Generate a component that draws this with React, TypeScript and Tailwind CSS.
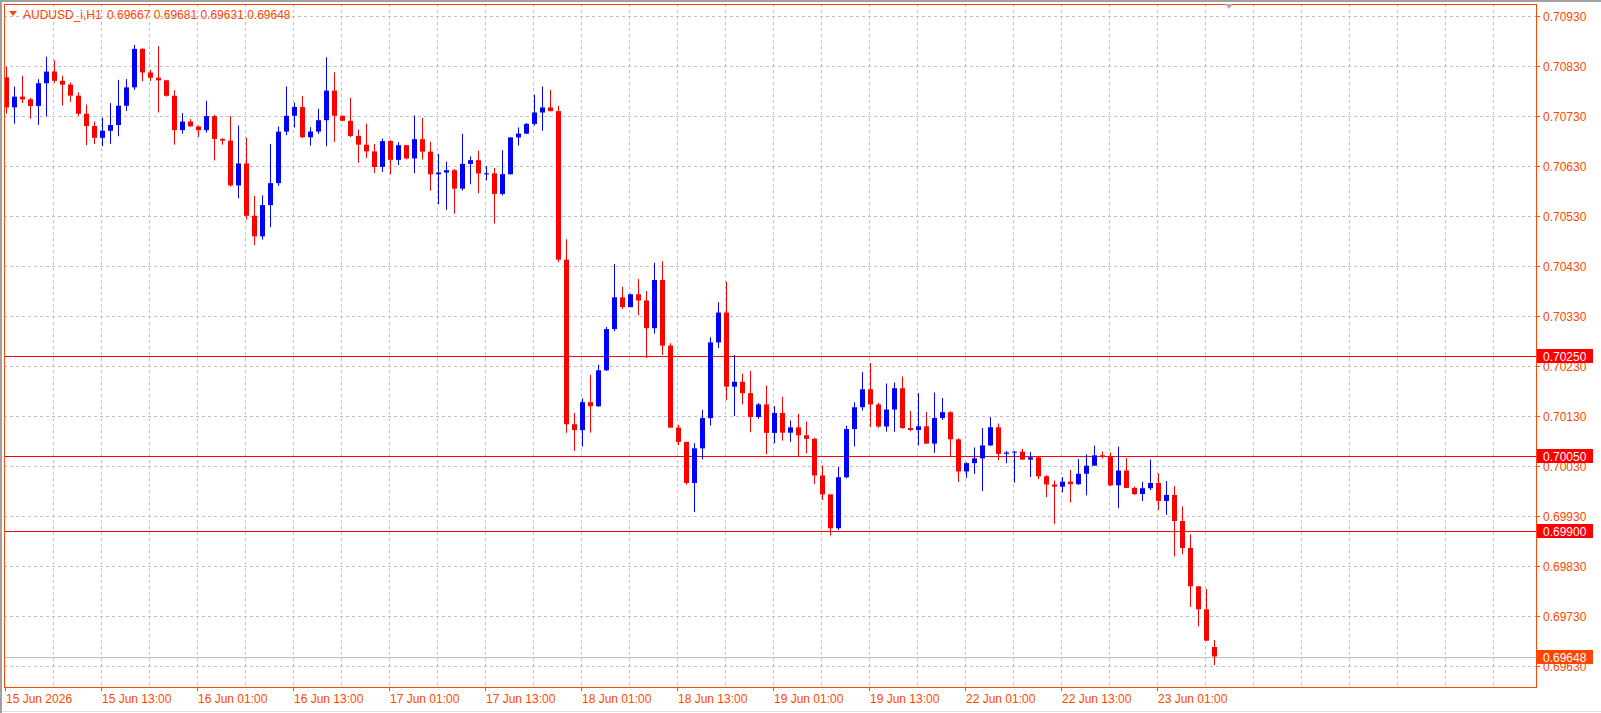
import React from "react";

const W = 1601, H = 713;
const L = 4, T = 4, R = 1536, B = 687;
const py = (p: number) => 15.5 + (0.7093 - p) * 50000;

const wp: [number, number][] = [
  [8,90],[30,110],[45,75],[60,75],[70,105],[90,125],[110,120],[130,55],[150,85],[165,105],[185,135],[205,125],[215,130],[220,170],[235,170],[245,235],[255,210],[270,145],[285,95],[295,135],[310,110],[320,95],[335,105],[345,125],[360,150],[375,150],[390,140],[400,140],[410,160],[430,175],[440,185],[455,160],[470,180],[485,180],[495,150],[510,130],[525,115],[530,110],[538,115],[545,265],[548,430],[555,410],[570,400],[580,390],[590,340],[600,300],[610,280],[625,300],[630,330],[635,290],[640,285],[645,300],[650,410],[660,420],[670,460],[680,440],[690,350],[695,300],[700,310],[710,380],[720,385],[735,400],[750,410],[765,420],[775,415],[790,425],[800,490],[810,505],[820,440],[830,420],[835,385],[845,390],[855,410],[865,410],[875,370],[880,420],[890,420],[905,425],[915,415],[925,415],[935,470],[945,440],[955,460],[965,420],[975,430],[985,435],[995,455],[1005,460],[1020,480],[1030,480],[1040,470],[1050,465],[1060,445],[1070,430],[1080,475],[1090,465],[1100,470],[1110,470],[1120,475],[1130,490],[1140,495],[1150,530],[1160,560],[1165,600],[1175,595],[1180,635],[1187,640],
];
const toBar = (x: number) => (x / 0.976 - 6) / 8;
const toPrice = (y: number) => 0.7093 - ((y - 15) / 48.8) * 0.001;
const pts = wp.map(([x, y]) => [toBar(x), toPrice(y)] as [number, number]);
const NB = 152;
let seed = 7;
const rnd = () => { seed = (seed * 16807) % 2147483647; return seed / 2147483647; };
const interp = (b: number) => {
  if (b <= pts[0][0]) return pts[0][1];
  for (let i = 1; i < pts.length; i++) {
    if (b <= pts[i][0]) {
      const [x0, y0] = pts[i - 1], [x1, y1] = pts[i];
      return y0 + ((b - x0) / Math.max(0.001, x1 - x0)) * (y1 - y0);
    }
  }
  return pts[pts.length - 1][1];
};
type C = { o: number; h: number; l: number; c: number };
const candles: C[] = [];
let prev = interp(0) + 0.0003;
for (let i = 0; i < NB; i++) {
  const base = interp(i);
  const c = i === NB - 1 ? 0.69648 : base + (rnd() - 0.5) * 0.0006;
  const o = i === NB - 1 ? 0.69667 : prev;
  const h = i === NB - 1 ? 0.69681 : Math.max(o, c) + rnd() * rnd() * 0.0008;
  const l = i === NB - 1 ? 0.69631 : Math.min(o, c) - rnd() * rnd() * 0.0008;
  candles.push({ o, h, l, c });
  prev = c;
}

const prices = Array.from({ length: 14 }, (_, i) => 0.7093 - i * 0.001);
const times = ["15 Jun 2026","15 Jun 13:00","16 Jun 01:00","16 Jun 13:00","17 Jun 01:00","17 Jun 13:00","18 Jun 01:00","18 Jun 13:00","19 Jun 01:00","19 Jun 13:00","22 Jun 01:00","22 Jun 13:00","23 Jun 01:00"];
const vgrid: number[] = [];
for (let x = 53; x < R; x += 48) vgrid.push(x);
const OR = "#ff4500";
const font = "'Liberation Sans', Arial, sans-serif";

export default function App() {
  return (
    <div className="w-[1601px] h-[713px] bg-white overflow-hidden border-t-2 border-l-2 border-[#a0a0a0]">
      <svg width={W} height={H} className="block -mt-[2px] -ml-[2px]" style={{ fontFamily: font }}>
        {vgrid.map((x) => (
          <line key={x} x1={x + 0.5} x2={x + 0.5} y1={T} y2={B} stroke="#c0c0c0" strokeDasharray="3 3" />
        ))}
        {prices.map((p) => (
          <line key={p} x1={L} x2={R} y1={Math.round(py(p)) + 0.5} y2={Math.round(py(p)) + 0.5} stroke="#c0c0c0" strokeDasharray="3 3" />
        ))}
        <rect x={L} y={657} width={R - L} height={1} fill="#c0c0c0" />
        {[0.7025, 0.7005, 0.699].map((p) => (
          <rect key={p} x={L} y={Math.round(py(p))} width={R - L} height={1} fill="#ff0000" />
        ))}
        {candles.map((k, i) => {
          const cx = 6 + i * 8;
          const up = k.c > k.o;
          const col = up ? "#0000ff" : "#ff0000";
          const top = py(Math.max(k.o, k.c)), bot = py(Math.min(k.o, k.c));
          return (
            <g key={i}>
              <line x1={cx + 0.5} x2={cx + 0.5} y1={py(k.h)} y2={py(k.l)} stroke={col} />
              <rect x={cx - 2} y={top} width={5} height={Math.max(1, bot - top)} fill={col} />
            </g>
          );
        })}
        <rect x={L + 0.5} y={T + 0.5} width={R - L} height={B - T} fill="none" stroke={OR} />
        <polygon points="1225,4 1233,4 1229,9" fill="#b0b0b0" />
        <polygon points="9,11 17,11 13,16" fill={OR} />
        <text x={23} y={19} fontSize={12} fill={OR}>AUDUSD_i,H1</text>
        <text x={107} y={19} fontSize={12} fill={OR}>0.69667 0.69681 0.69631 0.69648</text>
        {prices.map((p) => {
          const y = Math.round(py(p));
          return (
            <g key={p}>
              <line x1={R} x2={R + 4} y1={y + 0.5} y2={y + 0.5} stroke={OR} />
              <text x={1543} y={y + 5} fontSize={12} fill={OR}>{p.toFixed(5)}</text>
            </g>
          );
        })}
        {[[0.7025, "#ff0000"], [0.7005, "#ff0000"], [0.699, "#ff0000"], [0.69648, OR]].map(([p, c]) => {
          const y = Math.round(py(p as number));
          return (
            <g key={String(p)}>
              <rect x={1537} y={y - 7} width={56} height={14} fill={c as string} />
              <text x={1543} y={y + 5} fontSize={12} fill="#ffffff">{(p as number).toFixed(5)}</text>
            </g>
          );
        })}
        {times.map((t, i) => {
          const x = 5 + i * 96;
          return (
            <g key={t}>
              <line x1={x + 0.5} x2={x + 0.5} y1={B} y2={B + 4} stroke={OR} />
              <text x={x + 1} y={703} fontSize={12} fill={OR}>{t}</text>
            </g>
          );
        })}
        <line x1={0} x2={W} y1={711.5} y2={711.5} stroke="#e0e0e0" />
      </svg>
    </div>
  );
}
